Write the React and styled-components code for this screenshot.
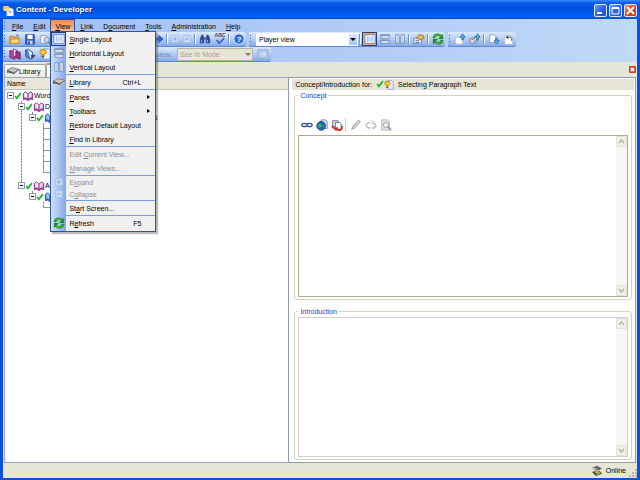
import React from "react";
import styled, { createGlobalStyle, css } from "styled-components";

const art = {
  app: (
    <>
      <path d="M1 2h6v5H1z" fill="#f5c33b" stroke="#fff3b0" />
      <path d="M5 4h6l2 2v8H5z" fill="#fff" stroke="#c9d3e6" />
      <path d="M2 4h5l2 3-4 1z" fill="#ffd75e" />
      <path d="M7 8h4M7 10h4" stroke="#7a90bd" />
    </>
  ),
  open: (
    <>
      <path d="M1 4h4l1 1h5v7H1z" fill="#e8a93c" stroke="#b87a1c" />
      <path d="M3 7h10l-2 5H1z" fill="#ffd876" stroke="#c48a2a" />
      <path d="M8 3q3-2 4 1" fill="none" stroke="#3b5fa8" />
    </>
  ),
  save: (
    <>
      <path d="M2 2h10v11H2z" fill="#3b62c4" stroke="#1d3a8c" />
      <path d="M4 2h6v5H4z" fill="#fff" />
      <path d="M4 9h6v4H4z" fill="#cdd8ee" />
      <path d="M5 10h2v3H5z" fill="#1d3a8c" />
    </>
  ),
  preview: (
    <>
      <path d="M2 3h6l2 2v7H2z" fill="#eef2fa" stroke="#8c9ab4" />
      <circle cx="9" cy="8" r="3" fill="#c9dcf5" stroke="#70809c" />
      <path d="M11 10l2 2" stroke="#70809c" strokeWidth="2" />
    </>
  ),
  page: <path d="M3 2h6l2 2v8H3z" fill="#fff" stroke="#6a7fa8" />,
  redo: <path d="M2 9V6h6V3l5 4-5 4V8H5v3H2z" fill="#2f65cf" stroke="#2555b0" />,
  plus: (
    <>
      <path d="M3 3h8v8H3z" fill="#c9dcf8" stroke="#a9c1e8" />
      <path d="M5 7h4M7 5v4" stroke="#7d9ac8" />
    </>
  ),
  minus: (
    <>
      <path d="M3 3h8v8H3z" fill="#c9dcf8" stroke="#a9c1e8" />
      <path d="M5 7h4" stroke="#7d9ac8" />
    </>
  ),
  find: (
    <>
      <path d="M3 2h2l1 4v6H1V7zM9 2h2l2 5v5H8V6z" fill="#2d4b8e" />
      <path d="M6 5h2v3H6z" fill="#4a69ae" />
      <path d="M3 8v3M10 8v3" stroke="#a8c2ef" />
    </>
  ),
  spell: (
    <>
      <text x="7" y="5" textAnchor="middle" fontSize="6" fontWeight="bold" fill="#3d4658">
        ABC
      </text>
      <path d="M3 8l3 4 6-6" fill="none" stroke="#3b62c4" strokeWidth="2" />
    </>
  ),
  help: (
    <>
      <circle cx="7" cy="7" r="6" fill="#3267d6" stroke="#e3edff" />
      <text x="7" y="10" textAnchor="middle" fontSize="9" fontWeight="bold" fill="#fff">
        ?
      </text>
    </>
  ),
  single: (
    <>
      <path d="M1 2h12v10H1z" fill="#fff" stroke="#5a7dbb" />
      <path d="M3 4h8v6H3z" fill="#c8dcf8" />
      <path d="M4 3v8M10 3v8" stroke="#8aa9da" strokeDasharray="1 1" />
    </>
  ),
  horizontal: (
    <>
      <path d="M2 2h10v4H2zM2 8h10v4H2z" fill="#e9f1fd" stroke="#7088b0" />
      <path d="M2 3h10M2 9h10" stroke="#5f7cb0" />
    </>
  ),
  vertical: (
    <>
      <path d="M2 2h4v10H2zM8 2h4v10H8z" fill="#e9f1fd" stroke="#7088b0" />
      <path d="M4 4v7M10 4v7" stroke="#a8bfe4" />
    </>
  ),
  hand: (
    <>
      <path d="M1 6h9v6H1z" fill="#e9eef7" stroke="#7b8aa6" />
      <path d="M4 6l3-4 5 1 1 3-4 2z" fill="#f0b94f" stroke="#96692a" />
      <path d="M3 9h4M3 11h4" stroke="#4e6cab" />
    </>
  ),
  refresh: (
    <>
      <path d="M2 6q1-4 5-4 2 0 4 2" fill="none" stroke="#1f8a22" strokeWidth="3" />
      <path d="M13 1v6H7z" fill="#1f8a22" />
      <path d="M2 5q2-3 5-3 2 0 4 2" fill="none" stroke="#5fd653" />
      <path d="M12 8q-1 4-5 4-2 0-4-2" fill="none" stroke="#1f8a22" strokeWidth="3" />
      <path d="M1 13V7h6z" fill="#1f8a22" />
      <path d="M12 9q-2 3-5 3-2 0-4-2" fill="none" stroke="#5fd653" />
    </>
  ),
  checkin: (
    <>
      <path d="M2 5h6l2 2v6H2z" fill="#fff" stroke="#b3bfd4" />
      <path d="M10 1l3 4h-2v3H9V5H7z" fill="#58b7dc" stroke="#2a6f96" />
    </>
  ),
  checkinAll: (
    <>
      <path d="M1 7l6-3 3 2v4l-5 3-4-2z" fill="#d7dce6" stroke="#6f7c94" />
      <path d="M10 1l3 4h-2v3H9V5H7z" fill="#58b7dc" stroke="#2a6f96" />
      <path d="M3 8l4-2M5 11l4-3" stroke="#4b5669" />
    </>
  ),
  checkout: (
    <>
      <path d="M2 2h5l2 2v7H2z" fill="#fff" stroke="#8798b8" />
      <path d="M10 13l3-4h-2V6H9v3H7z" fill="#58b7dc" stroke="#2a6f96" />
    </>
  ),
  undo: (
    <>
      <path d="M2 3h6l3 3v7H2z" fill="#fff" stroke="#b3bfd4" />
      <path d="M6 5h3q2 1 1 4" fill="none" stroke="#333" />
      <path d="M6 3v4L3 5z" fill="#333" />
    </>
  ),
  book: (
    <>
      <path d="M1 3l6 1v9l-6-2z" fill="#b3479f" stroke="#70215f" />
      <path d="M5 1l5 2v8l-5-2z" fill="#f3e3f1" stroke="#892c78" />
      <path d="M8 4l5 1v8l-5-2z" fill="#a6358f" stroke="#5d174e" />
    </>
  ),
  lesson: (
    <>
      <path d="M2 2l6 3v8l-6-3z" fill="#4c86df" stroke="#1c4590" />
      <path d="M4 1l6 4v5l3-2-5 5" fill="#eaf2ff" stroke="#1c3a70" />
      <path d="M8 8l5 1-4 4z" fill="#333f55" />
    </>
  ),
  topic: (
    <>
      <path d="M5 1h6l2 2v10H5z" fill="#e7effb" stroke="#7c97c6" />
      <path d="M2 2h5l2 3-3 3H3L1 5z" fill="#ffc72d" stroke="#a8770c" />
      <path d="M3 10h3" stroke="#5c5c5c" strokeWidth="2" />
    </>
  ),
  openBook: (
    <>
      <path d="M1 4l3-2 3 3 3-3 3 2v8l-3-1-3 2-3-2-3 1z" fill="#a74aa8" />
      <path d="M2 4l2-2 3 3v6L4 9l-2 1z" fill="#f8effa" stroke="#7c2d86" />
      <path d="M12 4l-2-2-3 3v6l3-2 2 1z" fill="#e9d5ee" stroke="#7c2d86" />
    </>
  ),
  blueBook: (
    <>
      <path d="M1 4l3-2 3 3 3-3 3 2v8l-3-1-3 2-3-2-3 1z" fill="#3c6fd4" />
      <path d="M2 4l2-2 3 3v6L4 9l-2 1z" fill="#9cc2f7" stroke="#2656b5" />
      <path d="M12 4l-2-2-3 3v6l3-2 2 1z" fill="#cfe1fb" stroke="#2656b5" />
    </>
  ),
  check: <path d="M2 7l3 4 7-9" fill="none" stroke="#17b52a" strokeWidth="3" />,
  library: (
    <>
      <path d="M0 7l6-3 8 2-6 5-8-2z" fill="#4c4c50" />
      <path d="M0 6l6-3 8 2-6 4z" fill="#c7c6c4" stroke="#77757a" />
      <path d="M1 9l7 2 5-4" fill="none" stroke="#eee" />
    </>
  ),
  go: (
    <>
      <path d="M1 2h12v10H1z" fill="#b4c8e7" stroke="#93abd3" />
      <path d="M3 7h7M7 4l3 3-3 3" fill="none" stroke="#eaf1fc" />
    </>
  ),
  link: (
    <>
      <ellipse cx="4" cy="7" rx="3" ry="2" fill="none" stroke="#35558f" strokeWidth="1.500" />
      <ellipse cx="10" cy="7" rx="3" ry="2" fill="none" stroke="#35558f" strokeWidth="1.500" />
      <path d="M4 7h6" stroke="#7d95bf" />
    </>
  ),
  web: (
    <>
      <path d="M6 1h5l2 2v8H6z" fill="#d9e5f7" stroke="#6b84b4" />
      <circle cx="6" cy="8" r="5" fill="#2469b8" stroke="#123c78" />
      <path d="M3 5l3 1 1 2-3 3-1-2zM8 9l2-2v3z" fill="#3fae52" />
    </>
  ),
  pack: (
    <>
      <path d="M2 2h6l1 2v5H2z" fill="#e8edf6" stroke="#52617e" />
      <path d="M5 4h5l2 2v6H5z" fill="#fff" stroke="#52617e" />
      <path d="M1 8q3 5 7 2M12 8q2 3-1 5l-7-1" fill="none" stroke="#d8251c" strokeWidth="2" />
    </>
  ),
  edit: <path d="M2 12l1-3 7-8 2 2-7 8z" fill="#d2d2cf" stroke="#9a9a96" />,
  unlink: (
    <>
      <path
        d="M6 5L4 4 1 7l2 3h3M8 5h3l2 3-3 3-2-1"
        fill="none"
        stroke="#b9b9b5"
        strokeWidth="1.500"
      />
      <path d="M8 1l-1 3M11 2L9 4M5 13l1-3M3 12l2-2" stroke="#c4c4c0" />
    </>
  ),
  view: (
    <>
      <path d="M2 1h7l2 2v10H2z" fill="#e3e3df" stroke="#b3b3af" />
      <circle cx="7" cy="7" r="3" fill="#f5f5f2" stroke="#9b9b97" />
      <path d="M9 9l4 4" stroke="#9b9b97" strokeWidth="2" />
    </>
  ),
  online: (
    <>
      <path d="M1 3l6-2 6 3-6 3z" fill="#64676f" />
      <path d="M3 6h7v4H3z" fill="#e6b14c" />
      <path d="M1 8l5 5 7-3-3-3z" fill="#3d4656" />
      <path d="M4 8l5-1 1 2-4 1z" fill="#e6b14c" />
      <path d="M2 3l5 2M6 12l5-3" stroke="#cfdff3" />
    </>
  ),
};

const Icon = ({ name, size = 12 }) => (
  <Svg viewBox="0 0 14 14" width={size} height={size} aria-hidden="true">
    {art[name]}
  </Svg>
);

// "&File" -> F underlined
const Label = ({ text }) => {
  const at = text.indexOf("&");
  if (at < 0) return <span>{text}</span>;
  return (
    <span>
      {text.slice(0, at)}
      <u>{text[at + 1]}</u>
      {text.slice(at + 2)}
    </span>
  );
};

const menus = ["&File", "&Edit", "&View", "&Link", "D&ocument", "&Tools", "&Administration", "&Help"];

const viewMenu = [
  [
    { label: "&Single Layout", icon: "single", on: true },
    { label: "&Horizontal Layout", icon: "horizontal" },
    { label: "&Vertical Layout", icon: "vertical" },
  ],
  [{ label: "&Library", icon: "library", keys: "Ctrl+L" }],
  [
    { label: "&Panes", sub: true },
    { label: "&Toolbars", sub: true },
    { label: "&Restore Default Layout" },
    { label: "&Find in Library" },
  ],
  [
    { label: "Edit &Current View...", off: true },
    { label: "&Manage Views...", off: true },
  ],
  [
    { label: "E&xpand", icon: "plus", off: true, small: true },
    { label: "C&ollapse", icon: "minus", off: true, small: true },
  ],
  [{ label: "St&art Screen..." }],
  [{ label: "R&efresh", icon: "refresh", keys: "F5" }],
];

const topic = { icon: "topic" };

const tree = [
  {
    label: "Word",
    icon: "openBook",
    children: [
      {
        label: "Doc",
        icon: "openBook",
        children: [
          {
            label: "Working on Text and Paragraphs",
            icon: "blueBook",
            children: [topic, topic, topic, topic, topic],
          },
        ],
      },
      {
        label: "App",
        icon: "openBook",
        children: [{ icon: "blueBook", children: [topic] }],
      },
    ],
  },
];

const Node = ({ node }) => (
  <Item>
    <Row>
      {node.children ? <Expander aria-label="Collapse" /> : <Stub />}
      <Icon name="check" size={8} />
      <Icon name={node.icon} size={12} />
      {node.label && <span>{node.label}</span>}
    </Row>
    {node.children && (
      <Branch>
        {node.children.map((child, i) => (
          <Node key={i} node={child} />
        ))}
      </Branch>
    )}
  </Item>
);

const Tools = ({ names }) =>
  names.map((name, i) =>
    name === "|" ? (
      <Divider key={i} />
    ) : (
      <Tool key={i} $small={name === "plus" || name === "minus"} aria-label={name}>
        <Icon name={name} />
      </Tool>
    )
  );

const TextBox = ({ id, label, soft }) => (
  <Box $soft={soft}>
    <Area id={id} aria-label={label} />
    <Scroll>
      <ScrollButton aria-label="Scroll up">
        <Svg viewBox="0 0 7 7" width="7" height="7">
          <path d="M1 5l2.500-3 2.500 3" fill="none" stroke="#b9b8ad" strokeWidth="1.500" />
        </Svg>
      </ScrollButton>
      <ScrollButton aria-label="Scroll down">
        <Svg viewBox="0 0 7 7" width="7" height="7">
          <path d="M1 2l2.500 3 2.500-3" fill="none" stroke="#b9b8ad" strokeWidth="1.500" />
        </Svg>
      </ScrollButton>
    </Scroll>
  </Box>
);

const App = () => {
  return (
    <Window>
      <Global />
      <TitleBar>
        <Icon name="app" size={11} />
        <Title>Content - Developer</Title>
        <Caption aria-label="Minimize">
          <Svg viewBox="0 0 11 11" width="11" height="11">
            <path d="M2 8h5" stroke="#fff" strokeWidth="2" />
          </Svg>
        </Caption>
        <Caption aria-label="Maximize">
          <Svg viewBox="0 0 11 11" width="11" height="11">
            <path d="M2 3h7v6H2z" fill="none" stroke="#fff" />
            <path d="M2 3h7" stroke="#fff" strokeWidth="2" />
          </Svg>
        </Caption>
        <Caption $close aria-label="Close">
          <Svg viewBox="0 0 11 11" width="11" height="11">
            <path d="M2 2l7 7M9 2l-7 7" stroke="#fff" strokeWidth="2" />
          </Svg>
        </Caption>
      </TitleBar>

      <Bars>
        <MenuBar>
          <Grip />
          {menus.map((name) => (
            <MenuSlot key={name}>
              <MenuButton $open={name === "&View"}>
                <Label text={name} />
              </MenuButton>
              {name === "&View" && (
                <Popup>
                  {viewMenu.map((group, i) => (
                    <Group key={i}>
                      {group.map((item) => (
                        <Entry key={item.label} disabled={item.off} $small={item.small}>
                          <EntryIcon $on={item.on}>
                            {item.icon && <Icon name={item.icon} />}
                          </EntryIcon>
                          <Label text={item.label} />
                          {item.keys && <Keys>{item.keys}</Keys>}
                          {item.sub && <Arrow />}
                        </Entry>
                      ))}
                    </Group>
                  ))}
                </Popup>
              )}
            </MenuSlot>
          ))}
        </MenuBar>

        <ToolRow>
          <Toolbar>
            <Grip />
            <Tools
              names={["open", "save", "preview", "|", "page", "page", "page", "page", "page", "|", "page", "redo", "|", "plus", "minus", "|", "find", "spell", "|", "help"]}
            />
          </Toolbar>
          <Toolbar>
            <Grip />
            <Combo>
              <Select $width={102} aria-label="View" defaultValue="Player view">
                <option>Player view</option>
              </Select>
            </Combo>
            <Divider />
            <Tool $on aria-label="Single layout">
              <Icon name="single" />
            </Tool>
            <Tools names={["horizontal", "vertical", "|", "hand", "|", "refresh"]} />
          </Toolbar>
          <Toolbar>
            <Grip />
            <Tools names={["checkin", "checkinAll", "|", "checkout", "undo"]} />
          </Toolbar>
        </ToolRow>

        <ToolRow>
          <Toolbar>
            <Grip />
            <Tools names={["book", "lesson", "topic", "|", "page", "page", "|", "page", "page", "|", "page", "page"]} />
            <ModeLabel htmlFor="mode">view:</ModeLabel>
            <Combo $off>
              <Select id="mode" $width={76} disabled defaultValue="See It! Mode">
                <option>See It! Mode</option>
              </Select>
            </Combo>
            <Gap />
            <Tools names={["go"]} />
          </Toolbar>
        </ToolRow>
      </Bars>

      <Tabs>
        <Tab>
          <Icon name="library" size={12} />
          Library
        </Tab>
        <Tab $active aria-label="Content">
          <Icon name="openBook" size={11} />
        </Tab>
        <CloseTab aria-label="Close tab">
          <Svg viewBox="0 0 7 7" width="7" height="7">
            <path d="M2 2l3 3M5 2L2 5" stroke="#fff" strokeWidth="2" />
          </Svg>
        </CloseTab>
      </Tabs>

      <Main>
        <TreePane>
          <ColumnHead>Name</ColumnHead>
          <Root>
            {tree.map((node) => (
              <Node key={node.label} node={node} />
            ))}
          </Root>
        </TreePane>
        <TextPane>
          <PaneHead>
            Concept/Introduction for:
            <Pair>
              <Icon name="check" size={8} />
              <Icon name="topic" size={10} />
            </Pair>
            Selecting Paragraph Text
          </PaneHead>
          <Fields>
            <Field>
              <Legend>Concept</Legend>
              <FieldTools>
                <Tools names={["link", "web", "pack"]} />
                <Divider $light />
                <Tools names={["edit", "unlink", "view"]} />
              </FieldTools>
              <TextBox id="concept" label="Concept" />
            </Field>
            <Field>
              <Legend>Introduction</Legend>
              <TextBox id="introduction" label="Introduction" soft />
            </Field>
          </Fields>
        </TextPane>
      </Main>

      <Status>
        <Icon name="online" size={12} />
        Online
        <Svg viewBox="0 0 8 8" width="8" height="8">
          <path
            d="M6 0h2v2H6zM3 3h2v2H3zM6 3h2v2H6zM0 6h2v2H0zM3 6h2v2H3zM6 6h2v2H6z"
            fill="#bcb8a4"
          />
        </Svg>
      </Status>
    </Window>
  );
};

export default App;

const Global = createGlobalStyle`
  * {
    box-sizing: border-box;
  }
  body {
    margin: 0;
    background: #0a4fe0;
  }
  body, button, select, textarea {
    font-family: "Liberation Sans", Arial, sans-serif;
    font-size: 7px;
    line-height: 9px;
    color: #000;
  }
  button {
    padding: 0;
    border: 0;
    background: none;
  }
  u {
    text-underline-offset: 1px;
    text-decoration-thickness: 1px;
  }
`;

const Svg = styled.svg`
  display: block;
  flex: none;
`;

const Window = styled.div`
  display: flex;
  flex-direction: column;
  min-height: 100vh;
  border: solid #0a4fe0;
  border-width: 0 3px 2px;
`;

const TitleBar = styled.header`
  display: flex;
  align-items: center;
  gap: 2px;
  height: 19px;
  margin: 0 -3px;
  padding: 1px 3px 0 3px;
  background: linear-gradient(#3a8cff 0, #0a5be8 3px, #0050dc 8px, #0058ee 13px, #0366ff 17px, #0043c4);
`;

const Title = styled.h1`
  flex: 1;
  margin: 0;
  font-size: 8px;
  line-height: 10px;
  color: #fff;
  text-shadow: 1px 1px #0a318c;
`;

const Caption = styled.button`
  width: 13px;
  height: 13px;
  border: 1px solid #dbe6fb;
  border-radius: 2px;
  background: ${(props) =>
    props.$close
      ? "linear-gradient(135deg, #f0906c, #e2491f 50%, #c93a12)"
      : "linear-gradient(135deg, #6d9bf5, #2d66e4 50%, #1c50d0)"};
`;

const Bars = styled.div`
  background: linear-gradient(to right, #9ebef3, #b3cdf7 60%, #bfd9f7);
`;

const MenuBar = styled.nav`
  display: flex;
  height: 13px;
`;

const Grip = styled.span`
  width: 4px;
  margin: 3px 0;
  flex: none;
  background: repeating-linear-gradient(#3a5590 0 1px, transparent 1px 3px) 1px 0 / 1px 100% no-repeat;
`;

const MenuSlot = styled.div`
  position: relative;
  display: flex;
`;

const MenuButton = styled.button`
  padding: 0 4px;
  border: 1px solid transparent;
  border-bottom: 0;
  ${(props) =>
    props.$open &&
    css`
      border-color: #31529c;
      background: linear-gradient(#f58b4c, #f8c08f);
    `}
`;

const Popup = styled.div`
  position: absolute;
  top: 12px;
  left: 0;
  z-index: 2;
  width: 106px;
  padding-bottom: 1px;
  border: 1px solid #2c52a0;
  background: linear-gradient(to right, #cfe0fb, #82a8e6) 0 0 / 15px 100% no-repeat #f0f0f0;
  box-shadow: 2px 2px 1px rgba(80, 80, 80, 0.4);
`;

const Group = styled.div`
  & + &::before {
    content: "";
    display: block;
    height: 1px;
    margin-left: 15px;
    background: #7b9ed9;
  }
`;

const Entry = styled.button`
  display: flex;
  align-items: center;
  gap: 3px;
  width: 100%;
  height: ${(props) => (props.$small ? "12px" : "14px")};
  padding-right: 5px;
  text-align: left;

  &:disabled {
    color: #8d8d8d;
  }
`;

const EntryIcon = styled.span`
  display: flex;
  align-items: center;
  justify-content: center;
  width: 15px;
  height: 100%;
  ${(props) =>
    props.$on &&
    css`
      border: 1px solid #1d3c8f;
      background: #a9c5f2;
    `}
`;

const Keys = styled.span`
  margin-left: auto;
  padding-right: 9px;
`;

const Arrow = styled.span`
  margin-left: auto;
  border: solid transparent;
  border-width: 2px 0 2px 3px;
  border-left-color: #000;
`;

const ToolRow = styled.div`
  display: flex;
  gap: 3px;
  height: 15px;
`;

const Toolbar = styled.div`
  display: flex;
  align-items: center;
  border-bottom: 1px solid #5f88cf;
  border-radius: 0 2px 2px 0;
  background: linear-gradient(#dbe8fc, #b5cef5 50%, #84abe6);

  ${Grip} {
    height: 9px;
    margin: 0;
  }
`;

const Tool = styled.button`
  display: flex;
  align-items: center;
  justify-content: center;
  flex: none;
  width: ${(props) => (props.$small ? "12px" : "15px")};
  height: 14px;
  ${(props) =>
    props.$on &&
    css`
      border: 1px solid #26407c;
      background: #f6a45c;
    `}
`;

const Divider = styled.span`
  flex: none;
  width: 4px;
  height: ${(props) => (props.$light ? "14px" : "10px")};
  background: linear-gradient(
    to right,
    transparent 1px,
    ${(props) => (props.$light ? "#d5d2c2" : "#6c93d4")} 1px 2px,
    #fff 2px 3px,
    transparent 3px
  );
`;

const Combo = styled.div`
  position: relative;
  display: flex;
  margin-left: 3px;

  &::after {
    content: "";
    position: absolute;
    top: 5px;
    right: 2px;
    border: solid transparent;
    border-width: 3px 3px 0;
    border-top-color: ${(props) => (props.$off ? "#7f7d70" : "#000")};
    pointer-events: none;
  }
`;

const Select = styled.select`
  appearance: none;
  width: ${(props) => props.$width}px;
  height: 13px;
  padding: 0 10px 0 2px;
  border: 1px solid #fff;
  border-radius: 0;
  background: linear-gradient(#dce8fd, #a5c3f3) right / 8px 100% no-repeat #fff;

  &:disabled {
    border-color: #b5b29d;
    background: #e8e5d6;
    color: #a5a294;
    opacity: 1;
  }
`;

const ModeLabel = styled.label`
  padding: 0 2px;
  color: #7286ab;
`;

const Gap = styled.span`
  width: 3px;
`;

const Tabs = styled.div`
  display: flex;
  align-items: flex-end;
  height: 15px;
  padding: 0 1px;
  background: #e6e6d6;
`;

const Tab = styled.button`
  display: flex;
  align-items: center;
  height: 13px;
  padding: 0 5px 0 2px;
  border: 1px solid #a5a698;
  border-bottom: 0;
  border-radius: 2px 2px 0 0;
  background: linear-gradient(#fff, #ecebe2);
  ${(props) =>
    props.$active &&
    css`
      height: 14px;
      padding-left: 5px;
      border-top: 2px solid #e8912c;
      background: #fff;
    `}
`;

const CloseTab = styled.button`
  align-self: center;
  display: flex;
  margin-left: auto;
  border-radius: 1px;
  background: #dc3a16;
`;

const Main = styled.main`
  flex: 1;
  display: grid;
  grid-template-columns: 45fr 55fr;
  padding: 0 1px;
  background: #e6e6d6;
`;

const TreePane = styled.section`
  border: 1px solid #9aa6bd;
  border-right: 0;
  background: #fff;
`;

const ColumnHead = styled.div`
  height: 12px;
  padding: 1px 2px;
  border-bottom: 1px solid #c5c2ae;
  background: #e8e6d8;
`;

const Branch = styled.ul`
  margin: 0;
  padding: 0 0 1px 11px;
  list-style: none;
`;

const Root = styled(Branch)`
  padding-left: 2px;
`;

const Item = styled.li`
  background: repeating-linear-gradient(#888 0 2px, #ddd 2px 3px) 3px 0 / 1px 100% no-repeat;

  &:last-child {
    background-size: 1px 6px;
  }

  ${Root} > & {
    background: none;
  }
`;

const Row = styled.div`
  display: flex;
  align-items: center;
  height: 11px;
  white-space: nowrap;
`;

const Expander = styled.button`
  width: 7px;
  height: 7px;
  border: 1px solid #8b9bb5;
  background: linear-gradient(#000, #000) 1px 2px / 3px 1px no-repeat #fff;
`;

const Stub = styled.span`
  width: 11px;
  height: 1px;
  background: linear-gradient(#999, #999) 3px 0 / 7px 1px no-repeat;
`;

const TextPane = styled.section`
  display: flex;
  flex-direction: column;
  padding: 1px 1px 1px 3px;
  border: 1px solid #8f9bb0;
  background: #fff;
`;

const PaneHead = styled.div`
  display: flex;
  align-items: center;
  height: 11px;
  padding-left: 3px;
  background: #e6e4d5;
`;

const Pair = styled.span`
  display: flex;
  padding: 0 4px;
`;

const Fields = styled.div`
  flex: 1;
  display: grid;
  grid-template-rows: 209fr 153fr;
  gap: 7px;
  padding: 1px 2px;
`;

const Field = styled.fieldset`
  display: flex;
  flex-direction: column;
  min-width: 0;
  margin: 0;
  padding: 1px 3px 2px;
  border: 1px solid #d3d1c0;
  border-radius: 3px;
`;

const Legend = styled.legend`
  padding: 0 2px;
  color: #0a46d0;
`;

const FieldTools = styled.div`
  display: flex;
  align-items: center;
  padding: 17px 0 3px 1px;
`;

const Box = styled.div`
  flex: 1;
  display: flex;
  border: 1px solid ${(props) => (props.$soft ? "#d0cfcb" : "#aeac98")};
`;

const Area = styled.textarea`
  flex: 1;
  min-width: 0;
  height: auto;
  border: 0;
  outline: 0;
  resize: none;
`;

const Scroll = styled.div`
  display: flex;
  flex-direction: column;
  justify-content: space-between;
  width: 11px;
  background: #f6f6f3;
`;

const ScrollButton = styled.button`
  display: flex;
  align-items: center;
  justify-content: center;
  height: 11px;
  border: 1px solid #e2e0d4;
  border-radius: 1px;
  background: #f0efe8;
`;

const Status = styled.footer`
  display: flex;
  align-items: center;
  justify-content: flex-end;
  gap: 3px;
  height: 15px;
  background: #e6e6d6;

  svg:last-child {
    align-self: flex-end;
    margin-bottom: 1px;
  }
`;
